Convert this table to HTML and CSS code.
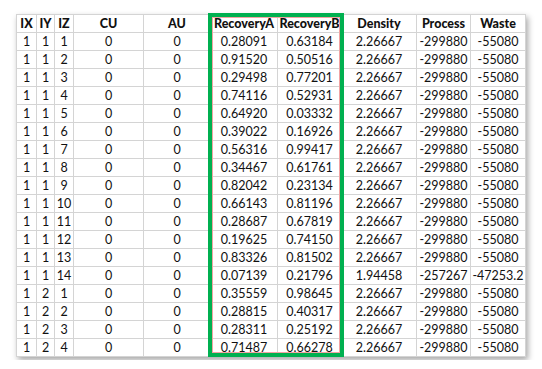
FILE: index.html
```html
<!DOCTYPE html>
<html lang="en">
<head>
    <meta charset="UTF-8">
    <title>Recovery table</title>
    <link rel="stylesheet" href="styles.css">
</head>
<body>
    <div class="sheet">
        <table class="grid">
            <colgroup>
                <col style="width: 20px"><col style="width: 18px"><col style="width: 19px">
                <col style="width: 70px"><col style="width: 67px"><col style="width: 67px">
                <col style="width: 64px"><col style="width: 75px"><col style="width: 54px">
                <col style="width: 55px">
            </colgroup>
            <thead>
                <tr><th>IX</th><th>IY</th><th>IZ</th><th>CU</th><th>AU</th><th>RecoveryA</th><th>RecoveryB</th><th>Density</th><th>Process</th><th>Waste</th></tr>
            </thead>
            <tbody>
                <tr><td>1</td><td>1</td><td>1</td><td>0</td><td>0</td><td>0.28091</td><td>0.63184</td><td>2.26667</td><td>-299880</td><td>-55080</td></tr>
                <tr><td>1</td><td>1</td><td>2</td><td>0</td><td>0</td><td>0.91520</td><td>0.50516</td><td>2.26667</td><td>-299880</td><td>-55080</td></tr>
                <tr><td>1</td><td>1</td><td>3</td><td>0</td><td>0</td><td>0.29498</td><td>0.77201</td><td>2.26667</td><td>-299880</td><td>-55080</td></tr>
                <tr><td>1</td><td>1</td><td>4</td><td>0</td><td>0</td><td>0.74116</td><td>0.52931</td><td>2.26667</td><td>-299880</td><td>-55080</td></tr>
                <tr><td>1</td><td>1</td><td>5</td><td>0</td><td>0</td><td>0.64920</td><td>0.03332</td><td>2.26667</td><td>-299880</td><td>-55080</td></tr>
                <tr><td>1</td><td>1</td><td>6</td><td>0</td><td>0</td><td>0.39022</td><td>0.16926</td><td>2.26667</td><td>-299880</td><td>-55080</td></tr>
                <tr><td>1</td><td>1</td><td>7</td><td>0</td><td>0</td><td>0.56316</td><td>0.99417</td><td>2.26667</td><td>-299880</td><td>-55080</td></tr>
                <tr><td>1</td><td>1</td><td>8</td><td>0</td><td>0</td><td>0.34467</td><td>0.61761</td><td>2.26667</td><td>-299880</td><td>-55080</td></tr>
                <tr><td>1</td><td>1</td><td>9</td><td>0</td><td>0</td><td>0.82042</td><td>0.23134</td><td>2.26667</td><td>-299880</td><td>-55080</td></tr>
                <tr><td>1</td><td>1</td><td>10</td><td>0</td><td>0</td><td>0.66143</td><td>0.81196</td><td>2.26667</td><td>-299880</td><td>-55080</td></tr>
                <tr><td>1</td><td>1</td><td>11</td><td>0</td><td>0</td><td>0.28687</td><td>0.67819</td><td>2.26667</td><td>-299880</td><td>-55080</td></tr>
                <tr><td>1</td><td>1</td><td>12</td><td>0</td><td>0</td><td>0.19625</td><td>0.74150</td><td>2.26667</td><td>-299880</td><td>-55080</td></tr>
                <tr><td>1</td><td>1</td><td>13</td><td>0</td><td>0</td><td>0.83326</td><td>0.81502</td><td>2.26667</td><td>-299880</td><td>-55080</td></tr>
                <tr><td>1</td><td>1</td><td>14</td><td>0</td><td>0</td><td>0.07139</td><td>0.21796</td><td>1.94458</td><td>-257267</td><td>-47253.2</td></tr>
                <tr><td>1</td><td>2</td><td>1</td><td>0</td><td>0</td><td>0.35559</td><td>0.98645</td><td>2.26667</td><td>-299880</td><td>-55080</td></tr>
                <tr><td>1</td><td>2</td><td>2</td><td>0</td><td>0</td><td>0.28815</td><td>0.40317</td><td>2.26667</td><td>-299880</td><td>-55080</td></tr>
                <tr><td>1</td><td>2</td><td>3</td><td>0</td><td>0</td><td>0.28311</td><td>0.25192</td><td>2.26667</td><td>-299880</td><td>-55080</td></tr>
                <tr><td>1</td><td>2</td><td>4</td><td>0</td><td>0</td><td>0.71487</td><td>0.66278</td><td>2.26667</td><td>-299880</td><td>-55080</td></tr>
            </tbody>
        </table>
        <div class="highlight"></div>
    </div>
</body>
</html>
```

FILE: styles.css
```css
body {
    margin: 0;
    background: #ffffff;
    font-family: Lato, "Open Sans", sans-serif;
    color: #111111;
}
.sheet {
    position: relative;
    display: inline-block;
    margin: 14px 0 0 16px;
    box-shadow: 2px 3px 6px rgba(0, 0, 0, 0.35);
}
.grid {
    border-collapse: collapse;
    table-layout: fixed;
    width: 509px;
    background: #ffffff;
    font-size: 12.5px;
}
.grid th,
.grid td {
    border: 1px solid #d4d4d4;
    height: 17px;
    padding: 0;
    line-height: 17px;
    text-align: center;
    white-space: nowrap;
    overflow: hidden;
}
.grid th {
    font-weight: 900;
}
.highlight {
    position: absolute;
    left: 192px;
    top: -1px;
    width: 136px;
    height: 344px;
    box-sizing: border-box;
    border: 4px solid #00b050;
    box-shadow: inset 0 0 0 1px #f2a3a3;
    pointer-events: none;
}
```
